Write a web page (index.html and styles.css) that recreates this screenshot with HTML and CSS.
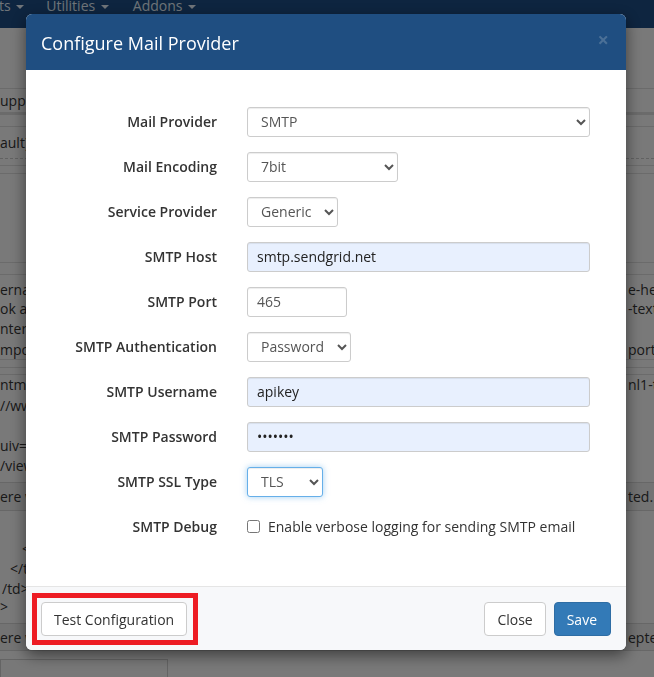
FILE: index.html
```html
<!DOCTYPE html>
<html lang="en">
<head>
    <meta charset="UTF-8">
    <meta name="viewport" content="width=device-width, initial-scale=1.0">
    <title>Configure Mail Provider</title>
    <link rel="stylesheet" href="styles.css">
</head>
<body>

<!-- page behind the dialog -->
<div class="navbar">
    <span class="nav-item">ts <span class="caret"></span></span>
    <span class="nav-item">Utilities <span class="caret"></span></span>
    <span class="nav-item">Addons <span class="caret"></span></span>
</div>
<div class="page">
    <div class="bg-row h60"></div>
    <div class="bg-row h24 line-top"><span>uppo</span><span></span></div>
    <div class="bg-row h14 line-top thick"></div>
    <div class="bg-row h32 line-top"><span>ault)</span><span></span></div>
    <div class="bg-row h7 dashed"></div>
    <div class="bg-row h8 line-top"></div>
    <div class="bg-row h89 line-top"></div>
    <div class="bg-row h12 line-top"></div>
    <div class="bg-row h6 line-top"></div>
    <div class="bg-row h19"><span>ernal</span><span>e-header</span></div>
    <div class="bg-row h19"><span>ok a{</span><span>-text</span></div>
    <div class="bg-row h21"><span>nter</span><span></span></div>
    <div class="bg-row h20"><span>mpor</span><span>port</span></div>
    <div class="bg-row h8 line-top"></div>
    <div class="bg-row h7 line-top"></div>
    <div class="bg-row h20 line-top"><span>ntml</span><span>nl1-t</span></div>
    <div class="bg-row h22"><span>//ww</span><span></span></div>
    <div class="bg-row h19"></div>
    <div class="bg-row h20"><span>uiv=</span><span></span></div>
    <div class="bg-row h20"><span>/view</span><span></span></div>
    <div class="bg-row h7"></div>
    <div class="bg-row h29 band"><span>ere w</span><span>ted.</span></div>
    <div class="bg-row h27"></div>
    <div class="bg-row h20"><span class="ind3">&lt;</span><span></span></div>
    <div class="bg-row h21"><span class="ind2">&lt;/t</span><span></span></div>
    <div class="bg-row h19"><span class="ind1">/td&gt;</span><span></span></div>
    <div class="bg-row h16"><span>&gt;</span><span></span></div>
    <div class="bg-row h9"></div>
    <div class="bg-row h28 band"><span>ere w</span><span>eptec</span></div>
    <div class="bg-box"></div>
</div>
<div class="backdrop"></div>

<!-- dialog -->
<div class="modal">
    <div class="modal-header">
        <h4>Configure Mail Provider</h4>
        <span class="close">&times;</span>
    </div>
    <form class="modal-body">
        <div class="form-row">
            <label>Mail Provider</label>
            <select class="control w-full"><option>SMTP</option></select>
        </div>
        <div class="form-row">
            <label>Mail Encoding</label>
            <select class="control w-enc"><option>7bit</option></select>
        </div>
        <div class="form-row">
            <label>Service Provider</label>
            <select class="control w-svc"><option>Generic</option></select>
        </div>
        <div class="form-row">
            <label>SMTP Host</label>
            <input class="control w-full autofill" type="text" value="smtp.sendgrid.net">
        </div>
        <div class="form-row">
            <label>SMTP Port</label>
            <input class="control w-port" type="text" value="465">
        </div>
        <div class="form-row">
            <label>SMTP Authentication</label>
            <select class="control w-auth"><option>Password</option></select>
        </div>
        <div class="form-row">
            <label>SMTP Username</label>
            <input class="control w-full autofill" type="text" value="apikey">
        </div>
        <div class="form-row">
            <label>SMTP Password</label>
            <input class="control w-full autofill" type="password" value="sendgri">
        </div>
        <div class="form-row">
            <label>SMTP SSL Type</label>
            <select class="control w-ssl focused"><option>TLS</option></select>
        </div>
        <div class="form-row">
            <label>SMTP Debug</label>
            <div class="check">
                <input type="checkbox" id="debug">
                <span>Enable verbose logging for sending SMTP email</span>
            </div>
        </div>
    </form>
    <div class="modal-footer">
        <div class="highlight">
            <button class="btn">Test Configuration</button>
        </div>
        <div class="footer-right">
            <button class="btn">Close</button>
            <button class="btn btn-primary">Save</button>
        </div>
    </div>
</div>

</body>
</html>
```

FILE: styles.css
```css
html, body {
    margin: 0;
    height: 100%;
    overflow: hidden;
}
body {
    font-family: "Open Sans", "Liberation Sans", sans-serif;
    font-size: 14px;
    color: #333;
    background-color: #f2f2f2;
}

/* background page */
.navbar {
    height: 28px;
    background-color: #1c4a80;
    display: flex;
    white-space: nowrap;
}
.nav-item {
    color: #dfe8f2;
    font-size: 14px;
    line-height: 14px;
    margin-top: -1px;
    margin-right: 24px;
}
.nav-item:first-child {
    margin-left: -1px;
    margin-right: 22px;
}
.caret {
    display: inline-block;
    width: 0;
    height: 0;
    margin-left: 2px;
    vertical-align: middle;
    border-top: 4px solid;
    border-left: 4px solid transparent;
    border-right: 4px solid transparent;
}
.page {
    width: 654px;
}
.bg-row {
    display: grid;
    grid-template-columns: 628px 1fr;
    align-items: center;
    white-space: nowrap;
    overflow: hidden;
    color: #333;
    box-sizing: border-box;
}
.bg-row span {
    overflow: hidden;
}
.line-top {
    border-top: 1px solid #d6d6d6;
}
.thick {
    border-top-width: 3px;
}
.dashed {
    border-top: 1px dashed #c4c4c4;
}
.band {
    background-color: #e6e6e6;
    border-top: 1px solid #cfcfcf;
    border-bottom: 1px solid #cfcfcf;
}
.ind1 { padding-left: 2px; }
.ind2 { padding-left: 10px; }
.ind3 { padding-left: 22px; }
.h6 { height: 6px; }
.h7 { height: 7px; }
.h8 { height: 8px; }
.h9 { height: 9px; }
.h12 { height: 12px; }
.h14 { height: 14px; }
.h16 { height: 16px; }
.h19 { height: 19px; }
.h20 { height: 20px; }
.h21 { height: 21px; }
.h22 { height: 22px; }
.h24 { height: 24px; }
.h27 { height: 27px; }
.h28 { height: 28px; }
.h29 { height: 29px; }
.h32 { height: 32px; }
.h60 { height: 60px; }
.h89 { height: 89px; }
.bg-box {
    margin-top: 8px;
    width: 166px;
    height: 40px;
    border: 1px solid #c8c8c8;
    background-color: #f0f0f0;
}
.backdrop {
    position: fixed;
    inset: 0;
    background-color: rgba(0, 0, 0, 0.5);
}

/* dialog */
.modal {
    position: fixed;
    left: 26px;
    top: 14px;
    width: 600px;
    background: #fff;
    border-radius: 6px;
    overflow: hidden;
    box-shadow: 0 5px 15px rgba(0, 0, 0, 0.5);
}
.modal-header {
    height: 56px;
    box-sizing: border-box;
    background-color: #1f4e81;
    padding: 0 15px;
    display: flex;
    align-items: center;
    justify-content: space-between;
}
.modal-header h4 {
    margin: 0;
    font-size: 18px;
    font-weight: 400;
    color: #fff;
    padding-top: 1px;
}
.close {
    color: #4b7097;
    font-size: 20px;
    font-weight: 700;
    line-height: 1;
    margin-right: 2px;
    margin-bottom: 4px;
}
.modal-body {
    margin: 0;
    padding: 36px 15px 30px 15px;
}
.form-row {
    display: grid;
    grid-template-columns: 176px 1fr;
    column-gap: 30px;
    align-items: center;
    height: 30px;
    margin-bottom: 15px;
}
.form-row label {
    text-align: right;
    font-weight: 600;
    color: #333;
    line-height: 30px;
    padding-top: 1px;
}
.control {
    box-sizing: border-box;
    height: 30px;
    padding: 0 9px;
    font-family: "Open Sans", "Liberation Sans", sans-serif;
    font-size: 14px;
    color: #555;
    background-color: #fff;
    border: 1px solid #ccc;
    border-radius: 3px;
    box-shadow: inset 0 1px 1px rgba(0, 0, 0, 0.075);
    outline: none;
}
.autofill {
    background-color: #e8f0fe;
    color: #222;
}
.focused {
    border-color: #66afe9;
    box-shadow: inset 0 1px 1px rgba(0, 0, 0, 0.075), 0 0 6px rgba(102, 175, 233, 0.6);
}
.w-full { width: 343px; }
.w-enc { width: 151px; }
.w-svc { width: 91px; }
.w-port { width: 100px; }
.w-auth { width: 104px; }
.w-ssl { width: 76px; }
.check {
    display: flex;
    align-items: center;
    gap: 8px;
    color: #333;
}
.check input {
    margin: 0;
    width: 13px;
    height: 13px;
}
.modal-footer {
    display: flex;
    justify-content: space-between;
    align-items: center;
    padding: 15px 15px 14px 15px;
    background-color: #f7f8fa;
    border-top: 1px solid #e5e5e5;
}
.footer-right {
    display: flex;
    gap: 8px;
}
.btn {
    height: 34px;
    padding: 0 12px;
    font-family: "Open Sans", "Liberation Sans", sans-serif;
    font-size: 14px;
    color: #333;
    background-color: #fff;
    border: 1px solid #ccc;
    border-radius: 4px;
}
.btn-primary {
    padding: 0 13px 0 12px;
    color: #fff;
    background-color: #337ab7;
    border-color: #2e6da4;
}
.highlight {
    position: relative;
}
.highlight::after {
    content: "";
    position: absolute;
    left: -9px;
    top: -9px;
    width: 166px;
    height: 52px;
    box-sizing: border-box;
    border: 5px solid #ed1c24;
}
```
